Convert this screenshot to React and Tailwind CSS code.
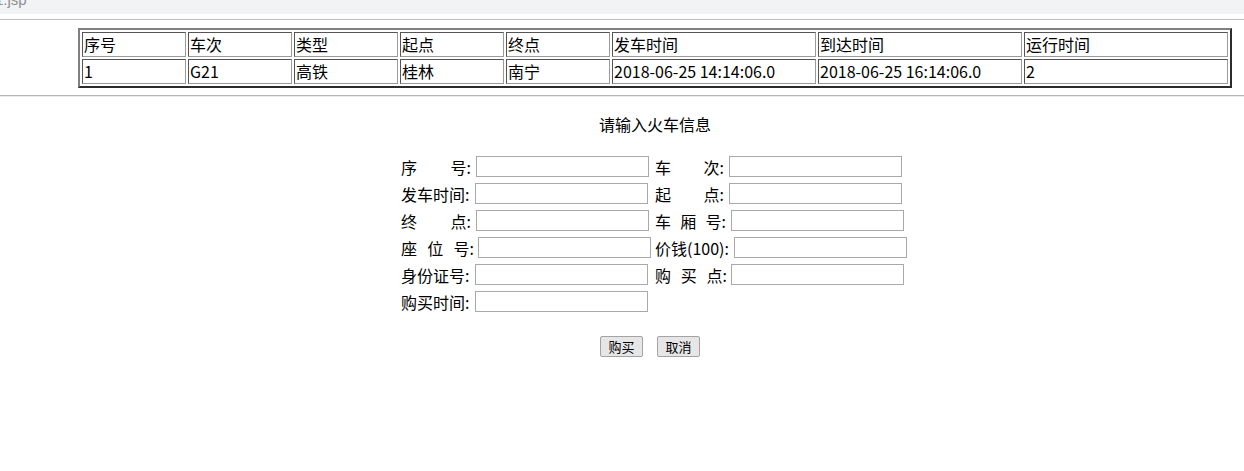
import React from "react";

const headers = ["序号", "车次", "类型", "起点", "终点", "发车时间", "到达时间", "运行时间"];
const rows = [["1", "G21", "高铁", "桂林", "南宁", "2018-06-25 14:14:06.0", "2018-06-25 16:14:06.0", "2"]];
const colWidths = ["w-[104px]", "w-[104px]", "w-[104px]", "w-[104px]", "w-[104px]", "w-[204px]", "w-[204px]", "w-[204px]"];

// each label: parts are spread across textWidth, input starts at labelWidth
const formRows = [
  [
    { parts: ["序", "号:"], textWidth: "w-[70px]", labelWidth: "w-[75px]" },
    { parts: ["车", "次:"], textWidth: "w-[69px]", labelWidth: "w-[74px]" },
  ],
  [
    { parts: ["发车时间:"], textWidth: "w-[70px]", labelWidth: "w-[74px]" },
    { parts: ["起", "点:"], textWidth: "w-[69px]", labelWidth: "w-[74px]" },
  ],
  [
    { parts: ["终", "点:"], textWidth: "w-[70px]", labelWidth: "w-[75px]" },
    { parts: ["车", "厢", "号:"], textWidth: "w-[71px]", labelWidth: "w-[76px]" },
  ],
  [
    { parts: ["座", "位", "号:"], textWidth: "w-[73px]", labelWidth: "w-[77px]" },
    { parts: ["价钱(100):"], textWidth: "w-[75px]", labelWidth: "w-[79px]" },
  ],
  [
    { parts: ["身份证号:"], textWidth: "w-[70px]", labelWidth: "w-[74px]" },
    { parts: ["购", "买", "点:"], textWidth: "w-[72px]", labelWidth: "w-[76px]" },
  ],
  [{ parts: ["购买时间:"], textWidth: "w-[70px]", labelWidth: "w-[74px]" }],
];

const Field = ({ field }) => (
  <div className="flex items-center">
    <div className={`${field.labelWidth} shrink-0`}>
      <span className={`${field.textWidth} flex justify-between whitespace-nowrap`}>
        {field.parts.map((p) => (
          <span key={p}>{p}</span>
        ))}
      </span>
    </div>
    <input type="text" className="w-[173px] h-[21px] border border-[#a9a9a9] bg-white outline-none" />
  </div>
);

const App = () => {
  return (
    <div className="w-[1244px] h-[471px] bg-white text-black overflow-hidden" style={{ fontFamily: '"Noto Sans CJK SC", "Noto Sans", sans-serif' }}>
      {/* address strip left over from the browser */}
      <div className="h-[14px] bg-[#f1f3f4] overflow-hidden">
        <div className="-mt-[8px] -ml-[5px] text-[15px] leading-[16px] text-[#8a8f95]" style={{ fontFamily: '"Liberation Sans", sans-serif' }}>
          1.jsp
        </div>
      </div>
      <div className="h-[5px]" />
      <div className="h-px bg-[#bdbdbd]" />

      {/* train list */}
      <div className="pt-[8px] pl-[78px]">
        <table className="border-separate border-spacing-[2px] border-2 border-t-[#808080] border-l-[#808080] border-r-[#2c2c2c] border-b-[#2c2c2c] text-[16px]">
          <tbody>
            <tr>
              {headers.map((h, i) => (
                <td key={h} className={`${colWidths[i]} h-[25px] p-0 pl-[1px] leading-[21px] border border-t-[#555] border-l-[#555] border-r-[#9a9a9a] border-b-[#9a9a9a] whitespace-nowrap`}>
                  {h}
                </td>
              ))}
            </tr>
            {rows.map((r) => (
              <tr key={r[0]}>
                {r.map((c, i) => (
                  <td key={i} className={`${colWidths[i]} h-[25px] p-0 pl-[1px] leading-[21px] border border-t-[#555] border-l-[#555] border-r-[#9a9a9a] border-b-[#9a9a9a] whitespace-nowrap`}>
                    {c}
                  </td>
                ))}
              </tr>
            ))}
          </tbody>
        </table>
      </div>

      <div className="h-[7px]" />
      <div className="h-px bg-[#b5b5b5]" />
      <div className="h-px bg-[#ececec]" />

      {/* purchase form */}
      <div className="pt-[16px] pl-[599px] text-[16px] leading-[22px]">请输入火车信息</div>

      <div className="pt-[18px] pl-[401px] text-[16px] leading-[22px]">
        {formRows.map((row, i) => (
          <div key={i} className="flex h-[27px] items-center">
            <div className="w-[254px]">
              <Field field={row[0]} />
            </div>
            {row[1] && <Field field={row[1]} />}
          </div>
        ))}
      </div>

      <div className="pt-[21px] pl-[600px] flex gap-[14px]">
        <button className="w-[43px] h-[21px] border border-[#a3a3a3] bg-[#e6e6e6] rounded-[2px] text-[13px] leading-[19px]">购买</button>
        <button className="w-[43px] h-[21px] border border-[#a3a3a3] bg-[#e6e6e6] rounded-[2px] text-[13px] leading-[19px]">取消</button>
      </div>
    </div>
  );
};

export default App;
